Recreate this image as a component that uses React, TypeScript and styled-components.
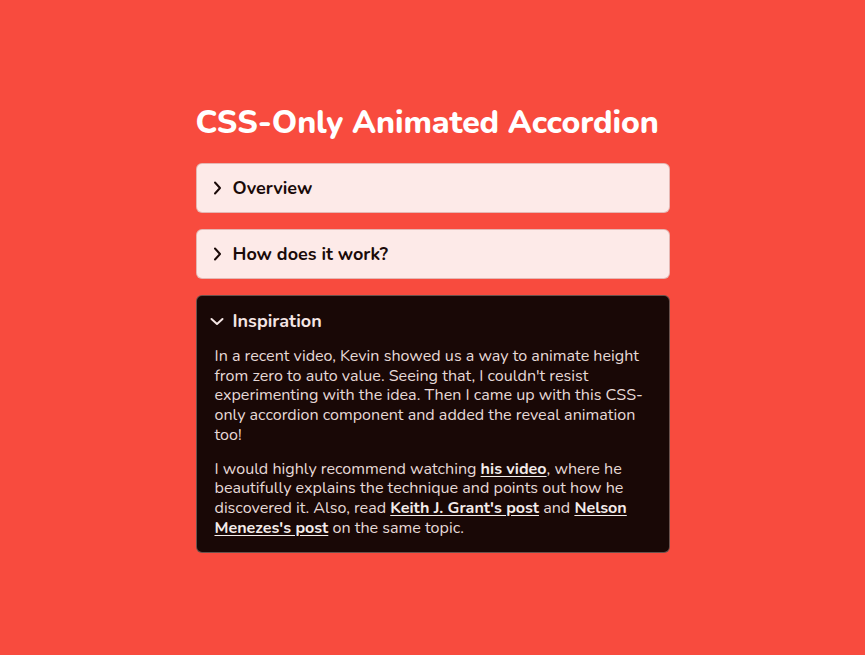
import React, { useState } from 'react'
import styled, { createGlobalStyle } from 'styled-components'

const GlobalStyle = createGlobalStyle`
  html, body {
    margin: 0;
    padding: 0;
    background: #f84b3e;
  }
  body {
    font-family: 'Nunito', 'Lato', 'Noto Sans', sans-serif;
  }
`

const Page = styled.main`
  min-height: 655px;
  display: flex;
  justify-content: center;
  padding-top: 101px;
  box-sizing: border-box;
`

const Wrapper = styled.div`
  width: 474px;
  display: flex;
  flex-direction: column;
  gap: 16px;
`

const Title = styled.h1`
  margin: 0 0 2px;
  color: #fff;
  font-size: 32px;
  font-weight: 800;
  line-height: 44px;
  letter-spacing: -0.1px;
  white-space: nowrap;
`

const Item = styled.div<{ open: boolean }>`
  border-radius: 6px;
  border: 1px solid ${({ open }) => (open ? 'rgba(255, 220, 210, 0.35)' : 'rgba(160, 30, 20, 0.25)')};
  background: ${({ open }) => (open ? '#190806' : '#fdeae8')};
  color: ${({ open }) => (open ? '#f4e6e4' : '#1a0a08')};
  overflow: hidden;
`

const Summary = styled.button<{ open: boolean }>`
  all: unset;
  box-sizing: border-box;
  width: 100%;
  height: 48px;
  display: flex;
  align-items: center;
  gap: 8px;
  padding: ${({ open }) => (open ? '2px' : '0')} 12px 0;
  font-size: 18px;
  font-weight: 700;
  cursor: pointer;
  color: inherit;
`

const Chevron = styled.svg<{ open: boolean }>`
  width: 16px;
  height: 16px;
  flex-shrink: 0;
  transform: rotate(${({ open }) => (open ? '90deg' : '0deg')});
`

const Body = styled.div`
  padding: 3px 18px 14px;
  font-size: 16.1px;
  line-height: 19.7px;
  color: #e6d9d7;

  p {
    margin: 0 0 14px;
  }
  p:last-child {
    margin-bottom: 0;
  }
  a {
    color: #f4ecea;
    font-weight: 700;
    text-decoration: underline;
    text-underline-offset: 2px;
  }
`

const items = [
  { title: 'Overview' },
  { title: 'How does it work?' },
  { title: 'Inspiration' },
]

export default function App() {
  const [openIndex, setOpenIndex] = useState(2)

  return (
    <>
      <GlobalStyle />
      <Page>
        <Wrapper>
          <Title>CSS-Only Animated Accordion</Title>
          {items.map((item, i) => {
            const open = i === openIndex
            return (
              <Item key={item.title} open={open}>
                <Summary open={open} onClick={() => setOpenIndex(open ? -1 : i)}>
                  <Chevron open={open} viewBox="0 0 16 16">
                    <path d="M6 2.5 L11 8 L6 13.5" fill="none" stroke="currentColor" strokeWidth="2" strokeLinecap="round" strokeLinejoin="round" />
                  </Chevron>
                  {item.title}
                </Summary>
                {open && (
                  <Body>
                    <p>
                      In a recent video, Kevin showed us a way to animate height from zero to auto value. Seeing that, I
                      couldn't resist experimenting with the idea. Then I came up with this CSS-only accordion component
                      and added the reveal animation too!
                    </p>
                    <p>
                      I would highly recommend watching <a href="#">his video</a>, where he beautifully explains the
                      technique and points out how he discovered it. Also, read <a href="#">Keith J. Grant's post</a> and{' '}
                      <a href="#">Nelson Menezes's post</a> on the same topic.
                    </p>
                  </Body>
                )}
              </Item>
            )
          })}
        </Wrapper>
      </Page>
    </>
  )
}
